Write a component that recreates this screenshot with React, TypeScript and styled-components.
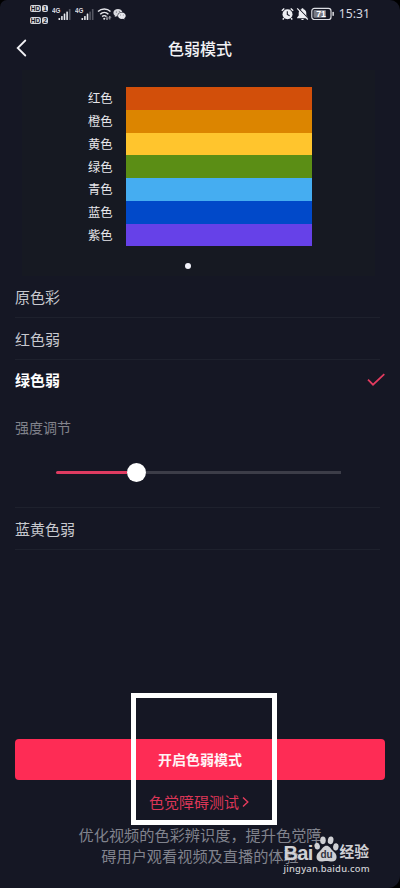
import React from "react";
import styled, { createGlobalStyle } from "styled-components";

const GlobalStyle = createGlobalStyle`
  * { box-sizing: border-box; }
  body {
    margin: 0;
    background: #000;
    font-family: "Noto Sans CJK SC", "Noto Sans", sans-serif;
  }
`;

const Screen = styled.main`
  position: relative;
  display: flex;
  flex-direction: column;
  width: 400px;
  height: 888px;
  overflow: hidden;
  border-radius: 7px 10px 12px 0;
  background: #151724;
  color: #fff;
`;

const StatusBar = styled.header`
  display: flex;
  align-items: center;
  justify-content: space-between;
  height: 27px;
  padding: 0 30px 0 30px;
`;

const StatusGroup = styled.div`
  display: flex;
  align-items: center;
`;

const HdStack = styled.div`
  display: grid;
  grid-template-columns: 11px 6px;
  column-gap: 1px;
  row-gap: 5px;
  margin: 1px 4px 0 0;
`;

const HdChip = styled.span`
  height: 7px;
  border-radius: 2px;
  background: #d5d6dc;
  color: #151724;
  font: 700 6.5px/7px "Liberation Sans", sans-serif;
  text-align: center;
`;

const Clock = styled.time`
  margin-left: 4px;
  color: #d9dae0;
  font: 400 12.2px/16px "Noto Sans", sans-serif;
`;

const TitleBar = styled.div`
  display: grid;
  grid-template-columns: 40px 1fr 40px;
  align-items: center;
  height: 42px;
  padding-bottom: 1px;
`;

const BackButton = styled.button`
  display: flex;
  padding: 0 0 0 16px;
  border: 0;
  background: none;
`;

const Title = styled.h1`
  margin: 0;
  color: #f1f1f4;
  font-size: 16px;
  font-weight: 500;
  line-height: 22px;
  text-align: center;
`;

const Preview = styled.section`
  height: 206px;
  margin: 1px 25px 0 22px;
  padding: 17px 0 0 66px;
  background: #161922;
`;

const ColorRow = styled.div`
  display: grid;
  grid-template-columns: 38px 186px;
  align-items: center;
  height: 22.75px;
`;

const ColorName = styled.span`
  color: #e6e6ea;
  font-size: 12.3px;
  line-height: 22px;
`;

const Swatch = styled.div<{ $color: string }>`
  height: 100%;
  background: ${(p) => p.$color};
`;

const PageDot = styled.div`
  width: 6px;
  height: 6px;
  margin: 17px 0 0 97px;
  border-radius: 50%;
  background: #f2f2fa;
`;

const Options = styled.section`
  padding: 0 15px;
`;

const Option = styled.div<{ $selected?: boolean; $divided?: boolean }>`
  display: flex;
  align-items: center;
  justify-content: space-between;
  height: ${(p) => (p.$selected ? "41px" : "42px")};
  margin-right: ${(p) => (p.$selected ? 0 : "5px")};
  padding-bottom: 1px;
  border-bottom: 1px solid ${(p) => (p.$divided ? "#1e212d" : "transparent")};
  color: ${(p) => (p.$selected ? "#fff" : "#c8c9cf")};
  font-size: 15px;
  font-weight: ${(p) => (p.$selected ? 700 : 400)};
`;

const Strength = styled.div`
  height: 107px;
  margin-right: 5px;
  padding-top: 15px;
  border-bottom: 1px solid #1e212d;
`;

const StrengthLabel = styled.div`
  color: #82838c;
  font-size: 14px;
  line-height: 22px;
`;

const Slider = styled.div`
  display: flex;
  align-items: center;
  width: 285px;
  height: 19px;
  margin: 25px 0 0 41px;
`;

const Track = styled.div<{ $filled?: boolean }>`
  flex: ${(p) => (p.$filled ? "0 0 71px" : 1)};
  height: 3px;
  border-radius: ${(p) => (p.$filled ? "2px 0 0 2px" : 0)};
  background: ${(p) => (p.$filled ? "#df3b61" : "#3c3d48")};
`;

const Thumb = styled.div`
  width: 19px;
  height: 19px;
  border-radius: 50%;
  background: #fff;
`;

const Actions = styled.footer`
  display: flex;
  flex-direction: column;
  align-items: center;
  margin-top: auto;
  height: 149.5px;
  padding: 0 15px;
`;

const PrimaryButton = styled.button`
  width: 100%;
  height: 41px;
  flex: none;
  border: 0;
  border-radius: 4px;
  background: #fe2c55;
  color: #fff3f5;
  font: 700 14px/22px "Noto Sans CJK SC", sans-serif;
`;

const TestLink = styled.a`
  display: flex;
  align-items: center;
  gap: 3px;
  height: 24px;
  margin: 10px 2px 0 0;
  color: #db3657;
  font-size: 15px;
  line-height: 24px;
`;

const Description = styled.p`
  margin: 10px 0 0;
  color: #81838d;
  font-size: 15.2px;
  line-height: 21px;
  text-align: center;
  white-space: nowrap;
`;

const Highlight = styled.div`
  position: absolute;
  top: 693px;
  left: 131px;
  width: 146px;
  height: 132px;
  border: 5px solid #fff;
`;

const Watermark = styled.div`
  position: absolute;
  top: 834px;
  left: 283.5px;
  width: 90px;
  color: #cfd0d4;
`;

const WatermarkBrand = styled.div`
  display: flex;
  align-items: flex-end;
  height: 29px;
`;

const Latin = styled.span`
  width: 30px;
  font: 700 20px/20px "Liberation Sans", sans-serif;
  letter-spacing: -0.7px;
`;

const Chinese = styled.span`
  margin-left: 1px;
  font-size: 14.8px;
  font-weight: 700;
  line-height: 24px;
`;

const WatermarkUrl = styled.div`
  font: 500 9.4px/12px "Noto Sans", sans-serif;
  letter-spacing: 0.22px;
  white-space: nowrap;
`;

const PawWrap = styled.span`
  position: relative;
  display: flex;
  width: 25px;
  height: 28px;
`;

const PawText = styled.span`
  position: absolute;
  top: 14px;
  left: 7px;
  color: #33343e;
  font: 700 10px/12px "Liberation Sans", sans-serif;
`;

const colors = [
  ["红色", "#d24f0a"],
  ["橙色", "#dc8500"],
  ["黄色", "#ffc52d"],
  ["绿色", "#5b8e15"],
  ["青色", "#45adf1"],
  ["蓝色", "#0149c9"],
  ["紫色", "#6641e8"],
];

const Signal = ({ level }: { level: number }) => (
  <svg width="22.5" height="16" viewBox="0 0 22.5 16">
    <text x="0" y="6.5" fill="#dcdde3" fontSize="6.3" fontWeight="700" fontFamily="Liberation Sans">
      4G
    </text>
    {[2, 4, 6.5, 8.5, 11].map((h, i) => (
      <rect
        key={h}
        x={6.5 + i * 2.6}
        y={14 - h}
        width="1.6"
        height={h}
        rx=".5"
        fill={i < level ? "#e7e8ed" : "#555762"}
      />
    ))}
  </svg>
);

const Wifi = () => (
  <svg width="16" height="14" viewBox="0 0 16 14" fill="none" stroke="#e4e5ea" strokeWidth="1.5">
    <path d="M1 4.5C4.6 1 10 1 13.5 4.5M3.2 7.2c2.4-2.3 5.9-2.3 8.2 0M5.2 9.6c1.2-1.2 3-1.2 4.2 0" />
    <circle cx="7.2" cy="11.7" r="1" fill="#e4e5ea" stroke="none" />
    <path d="M10 9.5v3m-1-1 1 1 1-1M12.8 12.5v-3m-1 1 1-1 1 1" strokeWidth=".8" />
  </svg>
);

const WeChat = () => (
  <svg width="13" height="12" viewBox="0 0 13 12">
    <path
      fill="#d8d9df"
      d="M5 1C2.4 1 .4 2.7.4 4.8c0 1.2.6 2.2 1.6 2.9L1.7 9.1l1.6-.8 1.2.2C4.3 5.7 6.5 4 9.3 4 8.9 2.2 7.1 1 5 1Z"
    />
    <path
      fill="#e7e8ed"
      d="M8.9 4.5c-2.2 0-3.9 1.4-3.9 3.2 0 1.8 1.7 3.2 3.9 3.2l1.2-.2 1.4.7-.3-1.2c.9-.6 1.5-1.5 1.5-2.5 0-1.8-1.7-3.2-3.8-3.2Z"
    />
    <g fill="#343641">
      <circle cx="3.3" cy="3.9" r=".5" />
      <circle cx="6.3" cy="3.7" r=".5" />
      <circle cx="7.6" cy="7" r=".4" />
      <circle cx="10.2" cy="7" r=".4" />
    </g>
  </svg>
);

const Alarm = () => (
  <svg width="15" height="14" viewBox="0 0 15 14">
    <circle cx="6.5" cy="7.2" r="5" fill="#eeeff3" />
    <path
      d="M.8 3.8 3.3 1.5M12.2 3.8 9.7 1.5M3 11.2l-1.3 1.4M10 11.2l1.3 1.4"
      stroke="#eeeff3"
      strokeWidth="1.4"
    />
    <path d="M6.3 4.2v3.3l2.3 1.2" fill="none" stroke="#151724" strokeWidth="1.1" />
  </svg>
);

const Muted = () => (
  <svg width="15" height="14" viewBox="0 0 15 14">
    <path
      fill="#eeeff3"
      d="M6.5 1.2c.6 0 1 .4 1 1 1.8.5 2.8 2 2.8 3.8V8.5l1.6 2v.7H1.1v-.7l1.6-2V6c0-1.8 1-3.3 2.8-3.8 0-.6.4-1 1-1ZM5.1 12h2.8c-.3 1.3-2.5 1.3-2.8 0Z"
    />
    <path d="m2.2 1.2 10.5 11" stroke="#151724" strokeWidth="1.2" />
    <path d="m1.2 1.4 10.6 11.1" stroke="#eeeff3" strokeWidth="1.2" />
  </svg>
);

const Battery = () => (
  <svg width="24" height="14" viewBox="0 0 24 14">
    <rect x=".8" y="1.3" width="19.2" height="11.2" rx="2.6" fill="none" stroke="#dcdde3" strokeWidth="1.2" />
    <rect x="2.5" y="3" width="12.5" height="7.8" rx="1" fill="#777983" />
    <rect x="21.4" y="4.8" width="1.5" height="4.2" rx=".7" fill="#dcdde3" />
    <text x="5.2" y="10" fill="#fff" fontSize="8.8" fontWeight="700" fontFamily="Liberation Sans">
      71
    </text>
  </svg>
);

const Paw = () => (
  <PawWrap>
    <svg width="25" height="28" viewBox="0 0 26 28" fill="#cfd0d4">
      <ellipse cx="3.3" cy="11" rx="2.8" ry="3.6" transform="rotate(-12 3.3 11)" />
      <ellipse cx="9.3" cy="5" rx="2.9" ry="4" />
      <ellipse cx="17.3" cy="5" rx="2.9" ry="4" transform="rotate(12 17.3 5)" />
      <ellipse cx="22.7" cy="11.7" rx="2.8" ry="3.8" transform="rotate(10 22.7 11.7)" />
      <path d="M13 10.5c3 0 4 2.6 6.3 5.1 2 2 4.2 3.7 4.2 6.6 0 3-2 4.8-5 4.8-2.1 0-3.3-.6-5.5-.6s-3.3.6-5.4.6c-3.1 0-5-1.9-5-4.8 0-3 2.1-4.6 4.1-6.6 2.3-2.5 3.3-5.1 6.3-5.1Z" />
    </svg>
    <PawText>du</PawText>
  </PawWrap>
);

export default function App() {
  return (
    <>
      <GlobalStyle />
      <Screen>
        <StatusBar>
          <StatusGroup>
            <HdStack>
              <HdChip>HD</HdChip>
              <HdChip>1</HdChip>
              <HdChip>HD</HdChip>
              <HdChip>2</HdChip>
            </HdStack>
            <Signal level={4} />
            <Signal level={3} />
            <Wifi />
            <WeChat />
          </StatusGroup>
          <StatusGroup>
            <Alarm />
            <Muted />
            <Battery />
            <Clock>15:31</Clock>
          </StatusGroup>
        </StatusBar>
        <TitleBar>
          <BackButton aria-label="返回">
            <svg width="11" height="18" viewBox="0 0 11 18">
              <path d="M9.3 1.5 1.7 9l7.6 7.5" fill="none" stroke="#f0f0f4" strokeWidth="1.8" strokeLinecap="round" />
            </svg>
          </BackButton>
          <Title>色弱模式</Title>
        </TitleBar>
        <Preview>
          {colors.map(([name, color]) => (
            <ColorRow key={name}>
              <ColorName>{name}</ColorName>
              <Swatch $color={color} />
            </ColorRow>
          ))}
          <PageDot />
        </Preview>
        <Options>
          <Option $divided>原色彩</Option>
          <Option $divided>红色弱</Option>
          <Option $selected>
            绿色弱
            <svg width="18" height="14" viewBox="0 0 18 14">
              <path d="m1 6.7 5 5L17.3 1.2" fill="none" stroke="#e33b5f" strokeWidth="1.7" />
            </svg>
          </Option>
          <Strength>
            <StrengthLabel>强度调节</StrengthLabel>
            <Slider>
              <Track $filled />
              <Thumb />
              <Track />
            </Slider>
          </Strength>
          <Option $divided>蓝黄色弱</Option>
        </Options>
        <Actions>
          <PrimaryButton>开启色弱模式</PrimaryButton>
          <TestLink>
            色觉障碍测试
            <svg width="7" height="12" viewBox="0 0 7 12">
              <path d="m1 1.5 4.8 4.5L1 10.5" fill="none" stroke="#e63c5d" strokeWidth="1.4" />
            </svg>
          </TestLink>
          <Description>
            优化视频的色彩辨识度，提升色觉障
            <br />
            碍用户观看视频及直播的体验
          </Description>
        </Actions>
        <Highlight />
        <Watermark>
          <WatermarkBrand>
            <Latin>Bai</Latin>
            <Paw />
            <Chinese>经验</Chinese>
          </WatermarkBrand>
          <WatermarkUrl>jingyan.baidu.com</WatermarkUrl>
        </Watermark>
      </Screen>
    </>
  );
}
